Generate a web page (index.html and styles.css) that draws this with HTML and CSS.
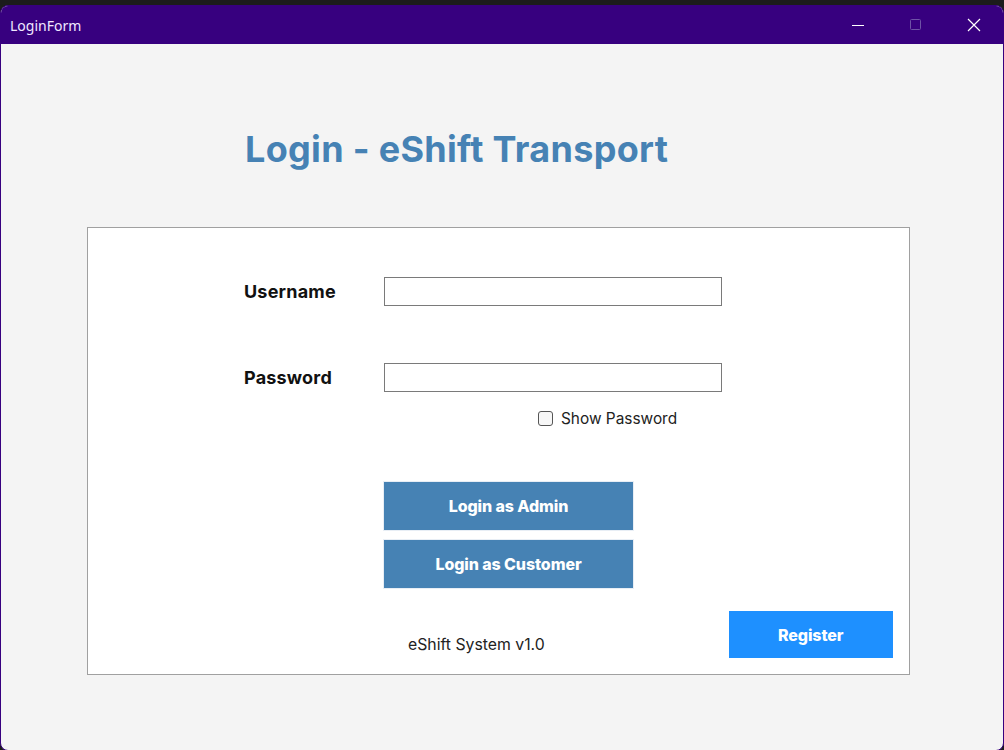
FILE: index.html
```html
<!DOCTYPE html>
<html>
<head>
<meta charset="utf-8">
<link rel="stylesheet" href="styles.css">
</head>
<body>
<div class="window">
  <div class="titlebar">
    <span class="wtitle">LoginForm</span>
    <div class="controls">
      <span class="ctl"><svg width="14" height="14" viewBox="0 0 14 14"><line x1="1" y1="7.5" x2="13" y2="7.5" stroke="#fff" stroke-width="1"/></svg></span>
      <span class="ctl"><svg width="14" height="14" viewBox="0 0 14 14"><rect x="1.5" y="1.5" width="10" height="10" rx="1" fill="none" stroke="#6e52a6" stroke-width="1"/></svg></span>
      <span class="ctl"><svg width="14" height="14" viewBox="0 0 14 14"><path d="M1 1 L13 13 M13 1 L1 13" stroke="#fff" stroke-width="1.2"/></svg></span>
    </div>
  </div>
  <div class="client">
    <h1 class="heading">Login - eShift Transport</h1>
    <div class="panel">
      <div class="row">
        <label class="lbl">Username</label>
        <input class="field" type="text">
      </div>
      <div class="row row2">
        <label class="lbl">Password</label>
        <input class="field" type="password">
      </div>
      <div class="showpw">
        <span class="chk"></span>
        <span class="chktext">Show Password</span>
      </div>
      <div class="btns">
        <button class="btn">Login as Admin</button>
        <button class="btn">Login as Customer</button>
      </div>
      <div class="footer">
        <span class="version">eShift System v1.0</span>
        <button class="reg">Register</button>
      </div>
    </div>
  </div>
</div>
</body>
</html>
```
FILE: styles.css
```css
html, body {
  margin: 0;
  padding: 0;
  background: #1c1c1c;
  width: 1004px;
  height: 750px;
  overflow: hidden;
}
.window {
  margin-top: 5px;
  height: 744px;
  border: 1px solid #37007f;
  border-radius: 8px;
  background: #f4f4f4;
  overflow: hidden;
  display: flex;
  flex-direction: column;
}
.titlebar {
  height: 38px;
  background: #37007f;
  display: flex;
  align-items: center;
  justify-content: space-between;
  flex: none;
}
.wtitle {
  color: #f0e8ff;
  font-family: "Noto Sans", sans-serif;
  font-size: 14px;
  padding-left: 9px;
}
.controls {
  display: flex;
  height: 100%;
}
.ctl {
  width: 58px;
  display: flex;
  align-items: center;
  justify-content: center;
}
.client {
  flex: 1;
  font-family: Inter, "Noto Sans", sans-serif;
}
.heading {
  margin: 79px 0 0 244px;
  font-size: 36px;
  font-weight: 700;
  color: #4682b4;
  line-height: 52px;
  letter-spacing: 0.3px;
}
.panel {
  margin: 52px 0 0 86px;
  width: 821px;
  height: 446px;
  border: 1px solid #a0a0a0;
  background: #fff;
  box-sizing: content-box;
}
.row {
  display: flex;
  align-items: center;
  margin: 49px 0 0 156px;
}
.row2 {
  margin-top: 57px;
}
.lbl {
  width: 140px;
  font-size: 18px;
  font-weight: 700;
  letter-spacing: 0.2px;
  color: #111;
}
.field {
  width: 338px;
  height: 29px;
  box-sizing: border-box;
  border: 1px solid #7a7a7a;
  background: #fff;
  margin: 0;
  padding: 0;
}
.showpw {
  display: flex;
  align-items: center;
  margin: 18px 0 0 450px;
  height: 16px;
}
.chk {
  width: 13px;
  height: 13px;
  border: 1px solid #555;
  border-radius: 3px;
  background: #f7f7f7;
}
.chktext {
  margin-left: 8px;
  font-size: 15.4px;
  color: #222;
}
.btns {
  margin: 55px 0 0 296px;
  display: flex;
  flex-direction: column;
  gap: 8px;
}
.btn {
  width: 251px;
  height: 50px;
  background: #4682b4;
  color: #fff;
  border: 1px solid #e8eef5;
  font-family: Inter, sans-serif;
  font-weight: 800;
  font-size: 16px;
  letter-spacing: -0.1px;
  padding: 0;
  margin-left: -1px;
}
.footer {
  display: flex;
  align-items: center;
  margin-top: 22px;
}
.version {
  margin-left: 320px;
  margin-top: 20px;
  font-size: 15.8px;
  color: #222;
}
.reg {
  margin-left: 184px;
  width: 164px;
  height: 47px;
  background: #1e90ff;
  color: #fff;
  border: none;
  font-family: Inter, sans-serif;
  font-weight: 800;
  font-size: 16px;
  letter-spacing: -0.1px;
  padding: 0;
}
```
